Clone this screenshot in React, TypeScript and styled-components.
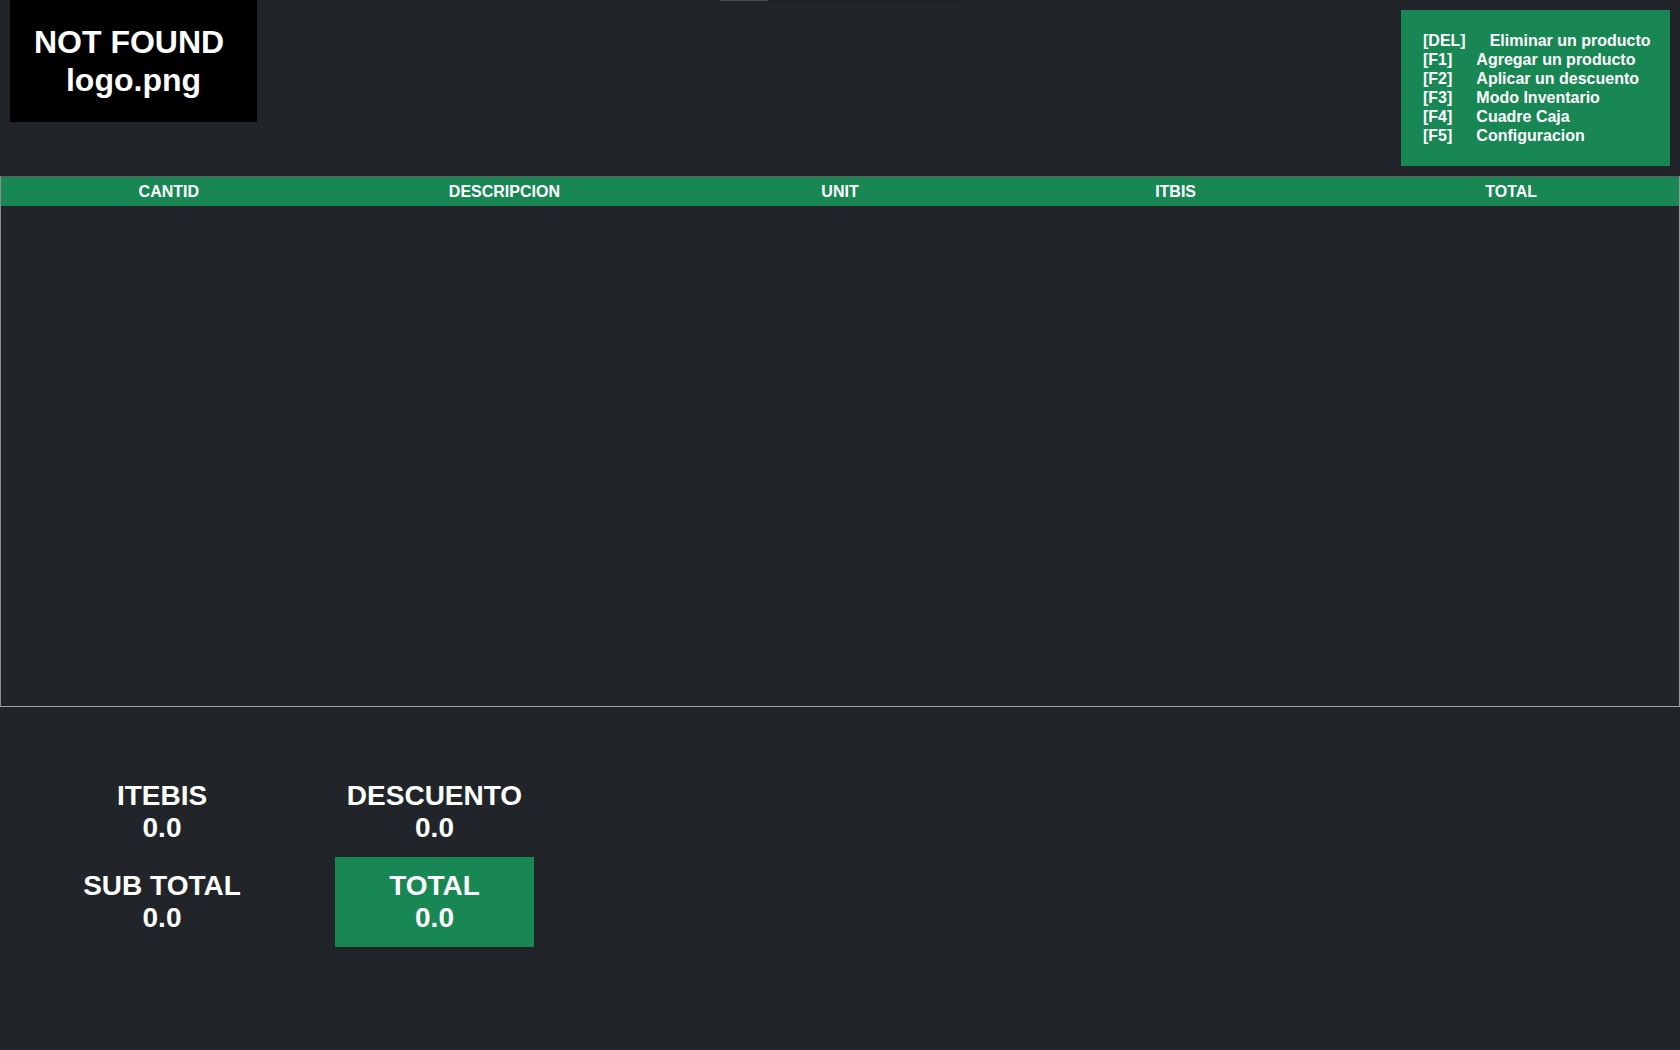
import React from "react";
import styled, { createGlobalStyle } from "styled-components";

const GlobalStyle = createGlobalStyle`
  html, body {
    margin: 0;
    padding: 0;
    background: #212529;
    min-height: 100%;
  }
  body {
    font-family: "Liberation Sans", Arial, Helvetica, sans-serif;
    color: #ffffff;
    min-height: 100vh;
  }
  * { box-sizing: border-box; }
`;

const Page = styled.div`
  position: relative;
  width: 100%;
  min-height: 100vh;
  background: #212529;
`;

const TopIndicator = styled.div`
  position: absolute;
  top: 0;
  left: 720px;
  width: 241px;
  height: 1px;
  background: #1c1f22;
  display: flex;
`;

const TopIndicatorFill = styled.div`
  width: 48px;
  height: 1px;
  background: #4a4b4c;
`;

const Header = styled.header`
  display: flex;
  justify-content: space-between;
  align-items: flex-start;
  height: 176px;
`;

const Logo = styled.div`
  margin-left: 10px;
  width: 247px;
  height: 122px;
  background: #000000;
  color: #ffffff;
  font-weight: 700;
  font-size: 32px;
  line-height: 38.4px;
  text-align: center;
  display: flex;
  flex-direction: column;
  justify-content: center;
  white-space: pre;
`;

const Shortcuts = styled.div`
  margin: 10px 10px 0 0;
  width: 269px;
  height: 156px;
  padding: 21px 10px 21px 22px;
  background: #198754;
  font-weight: 700;
  font-size: 16px;
  line-height: 19px;
  color: #ffffff;
`;

const ShortcutLine = styled.div`
  white-space: nowrap;
`;

const Key = styled.span`
  display: inline-block;
  margin-right: 24px;
`;

const Table = styled.section`
  width: 100%;
  border: 1px solid;
  border-color: #5c5c5c #9a9a9a #a0a3a6 #8c8c8c;
`;

const HeadRow = styled.div`
  display: grid;
  grid-template-columns: repeat(5, 1fr);
  height: 29px;
  background: #198754;
`;

const HeadCell = styled.div`
  display: flex;
  align-items: center;
  justify-content: center;
  font-weight: 700;
  font-size: 16px;
  color: #ffffff;
  padding-top: 1px;
`;

const Body = styled.div`
  height: 500px;
`;

const Summary = styled.section`
  margin-top: 60px;
  padding-left: 62px;
  display: grid;
  grid-template-columns: 200px 199px;
  grid-auto-rows: 90px;
  column-gap: 73px;
`;

const SummaryCell = styled.div<{ $highlight?: boolean }>`
  display: flex;
  flex-direction: column;
  align-items: center;
  justify-content: center;
  font-weight: 700;
  font-size: 28px;
  line-height: 32.4px;
  color: #ffffff;
  white-space: nowrap;
  background: ${(p) => (p.$highlight ? "#198754" : "transparent")};
`;

const shortcuts: [string, string][] = [
  ["[DEL]", "Eliminar un producto"],
  ["[F1]", "Agregar un producto"],
  ["[F2]", "Aplicar un descuento"],
  ["[F3]", "Modo Inventario"],
  ["[F4]", "Cuadre Caja"],
  ["[F5]", "Configuracion"],
];

const columns = ["CANTID", "DESCRIPCION", "UNIT", "ITBIS", "TOTAL"];

const totals: { label: string; value: string; highlight?: boolean }[] = [
  { label: "ITEBIS", value: "0.0" },
  { label: "DESCUENTO", value: "0.0" },
  { label: "SUB TOTAL", value: "0.0" },
  { label: "TOTAL", value: "0.0", highlight: true },
];

export default function App() {
  return (
    <Page>
      <GlobalStyle />
      <TopIndicator>
        <TopIndicatorFill />
      </TopIndicator>
      <Header>
        <Logo>
          <div>{"NOT FOUND\u00a0"}</div>
          <div>logo.png</div>
        </Logo>
        <Shortcuts>
          {shortcuts.map(([k, d]) => (
            <ShortcutLine key={k}>
              <Key>{k}</Key>
              {d}
            </ShortcutLine>
          ))}
        </Shortcuts>
      </Header>
      <Table>
        <HeadRow>
          {columns.map((c) => (
            <HeadCell key={c}>{c}</HeadCell>
          ))}
        </HeadRow>
        <Body />
      </Table>
      <Summary>
        {totals.map((t) => (
          <SummaryCell key={t.label} $highlight={t.highlight}>
            <div>{t.label}</div>
            <div>{t.value}</div>
          </SummaryCell>
        ))}
      </Summary>
    </Page>
  );
}
